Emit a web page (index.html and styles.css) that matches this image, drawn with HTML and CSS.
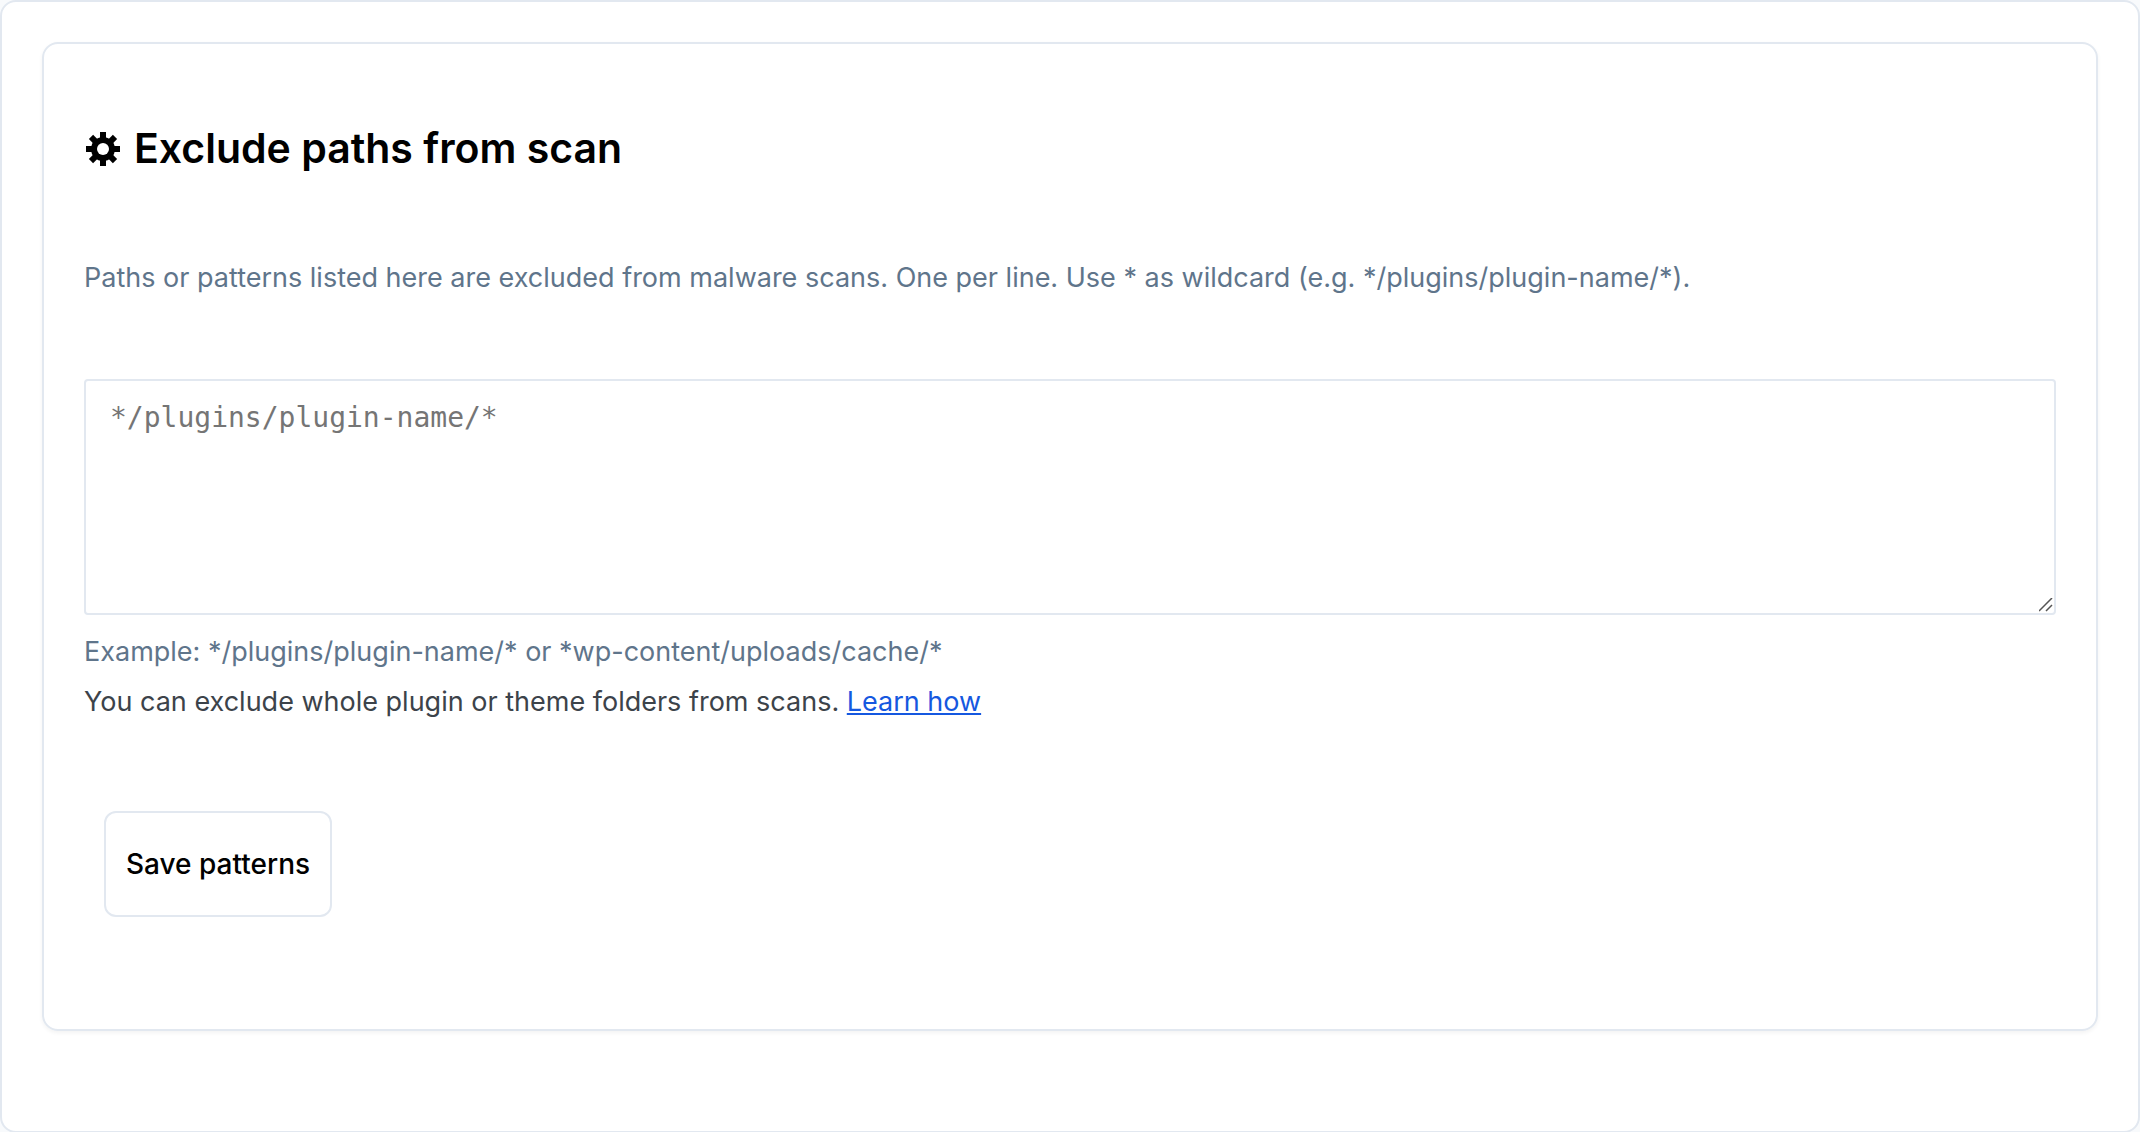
FILE: index.html
```
<!DOCTYPE html>
<html lang="en">
<head>
    <meta charset="UTF-8">
    <meta name="viewport" content="width=device-width, initial-scale=1.0">
    <title>Exclude paths from scan</title>
    <link rel="stylesheet" href="styles.css">
</head>
<body>
    <main class="panel">
        <form class="card">
            <h2 class="title">
                <svg class="gear" viewBox="0 0 34 34" aria-hidden="true">
                    <g fill="currentColor">
                        <path d="M14 0h6v34h-6z"/>
                        <path d="M0 14h34v6H0z"/>
                        <path d="M14 0h6v34h-6z" transform="rotate(45 17 17)"/>
                        <path d="M14 0h6v34h-6z" transform="rotate(-45 17 17)"/>
                        <circle cx="17" cy="17" r="12"/>
                    </g>
                    <circle cx="17" cy="17" r="6" fill="#fff"/>
                </svg>
                Exclude paths from scan
            </h2>
            <label class="intro" for="patterns">Paths or patterns listed here are excluded from malware scans. One per line. Use * as wildcard (e.g. */plugins/plugin-name/*).</label>
            <textarea class="patterns" id="patterns" placeholder="*/plugins/plugin-name/*"></textarea>
            <p class="example">Example: */plugins/plugin-name/* or *wp-content/uploads/cache/*</p>
            <p class="help">You can exclude whole plugin or theme folders from scans. <a href="#">Learn how</a></p>
            <button class="save" type="submit">Save patterns</button>
        </form>
    </main>
</body>
</html>
```

FILE: styles.css
```
*{
    box-sizing:border-box;
}
body{
    margin:0;
    overflow:hidden;
    background-color:#f8fafc;
    color:#3c434a;
    font-family:Inter, "Liberation Sans", sans-serif;
    font-size:27px;
    line-height:50px;
}
.panel{
    padding:40px 40px 100px;
    background-color:#fff;
    border:2px solid #e2e8f0;
    border-radius:16px;
}
.card{
    display:flex;
    flex-direction:column;
    padding:76px 40px 112px;
    border:2px solid #e2e8f0;
    border-radius:16px;
    box-shadow:0 2px 4px rgba(0,0,0,0.05);
}
.title{
    display:flex;
    align-items:center;
    gap:14px;
    margin:0;
    color:#000;
    font-size:41px;
    font-weight:600;
    line-height:57px;
}
.gear{
    width:34px;
    height:34px;
    margin-left:2px;
}
.intro{
    margin:76px 0;
    color:#5f758b;
}
.patterns{
    display:block;
    width:100%;
    height:236px;
    padding:12px 24px;
    background-color:#fff;
    border:2px solid #e2e8f0;
    border-radius:4px;
    font-family:"DejaVu Sans Mono", monospace;
    font-size:28px;
    line-height:50px;
    resize:vertical;
}
.patterns::placeholder{
    color:#757575;
}
.patterns::-webkit-resizer{
    background:url("data:image/svg+xml,%3Csvg xmlns='http://www.w3.org/2000/svg' viewBox='0 0 15 15'%3E%3Cpath d='M0 13L13 0M7 13L13 7' stroke='%23555' stroke-width='1.5'/%3E%3C/svg%3E") no-repeat;
}
.example{
    margin:12px 0 0;
    color:#5f758b;
}
.help{
    margin:0;
}
.help a{
    color:#1558e0;
}
.save{
    align-self:flex-start;
    margin:84px 20px 0;
    padding:26px 20px;
    background-color:#fff;
    border:2px solid #e2e8f0;
    border-radius:12px;
    color:#000;
    font-family:inherit;
    font-size:28px;
    font-weight:500;
    line-height:50px;
}
```
